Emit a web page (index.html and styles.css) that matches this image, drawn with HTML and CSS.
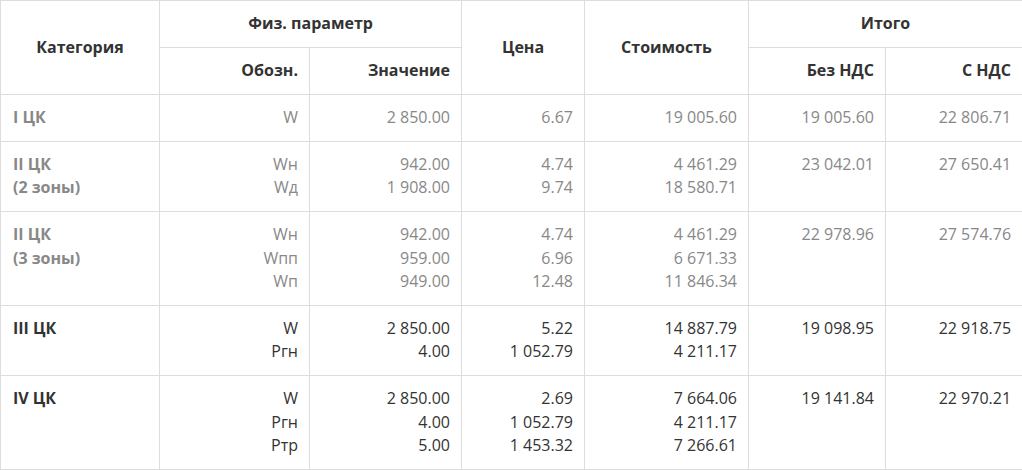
FILE: index.html
```html
<!DOCTYPE html>
<html lang="ru">
<head>
<meta charset="utf-8">
<title>Тарифы</title>
<link rel="stylesheet" href="styles.css">
</head>
<body>
<table class="tariffs">
  <colgroup>
    <col class="c1"><col class="c2"><col class="c3"><col class="c4"><col class="c5"><col class="c6"><col class="c7">
  </colgroup>
  <thead>
    <tr>
      <th rowspan="2" class="center">Категория</th>
      <th colspan="2" class="center">Физ. параметр</th>
      <th rowspan="2" class="center">Цена</th>
      <th rowspan="2" class="center">Стоимость</th>
      <th colspan="2" class="center">Итого</th>
    </tr>
    <tr>
      <th>Обозн.</th>
      <th>Значение</th>
      <th>Без НДС</th>
      <th>С НДС</th>
    </tr>
  </thead>
  <tbody>
    <tr class="muted">
      <td class="cat">I ЦК</td>
      <td>W</td>
      <td>2 850.00</td>
      <td>6.67</td>
      <td>19 005.60</td>
      <td>19 005.60</td>
      <td>22 806.71</td>
    </tr>
    <tr class="muted">
      <td class="cat">II ЦК<br>(2 зоны)</td>
      <td>Wн<br>Wд</td>
      <td>942.00<br>1 908.00</td>
      <td>4.74<br>9.74</td>
      <td>4 461.29<br>18 580.71</td>
      <td>23 042.01</td>
      <td>27 650.41</td>
    </tr>
    <tr class="muted">
      <td class="cat">II ЦК<br>(3 зоны)</td>
      <td>Wн<br>Wпп<br>Wп</td>
      <td>942.00<br>959.00<br>949.00</td>
      <td>4.74<br>6.96<br>12.48</td>
      <td>4 461.29<br>6 671.33<br>11 846.34</td>
      <td>22 978.96</td>
      <td>27 574.76</td>
    </tr>
    <tr>
      <td class="cat">III ЦК</td>
      <td>W<br>Pгн</td>
      <td>2 850.00<br>4.00</td>
      <td>5.22<br>1 052.79</td>
      <td>14 887.79<br>4 211.17</td>
      <td>19 098.95</td>
      <td>22 918.75</td>
    </tr>
    <tr>
      <td class="cat">IV ЦК</td>
      <td>W<br>Pгн<br>Pтр</td>
      <td>2 850.00<br>4.00<br>5.00</td>
      <td>2.69<br>1 052.79<br>1 453.32</td>
      <td>7 664.06<br>4 211.17<br>7 266.61</td>
      <td>19 141.84</td>
      <td>22 970.21</td>
    </tr>
  </tbody>
</table>
</body>
</html>
```
FILE: styles.css
```css
html, body {
  margin: 0;
  padding: 0;
  background: #fff;
}
body {
  font-family: "Open Sans", "Liberation Sans", sans-serif;
  font-size: 16px;
  color: #333;
}
.tariffs {
  border-collapse: collapse;
  width: 1022px;
  table-layout: fixed;
}
.c1 { width: 159px; }
.c2 { width: 150px; }
.c3 { width: 152px; }
.c4 { width: 123px; }
.c5 { width: 164px; }
.c6 { width: 137px; }
.c7 { width: 137px; }
.tariffs th,
.tariffs td {
  border: 1px solid #dddddd;
  padding: 11.25px 11px;
  line-height: 23.4px;
  text-align: right;
  vertical-align: top;
}
.tariffs th {
  font-weight: 700;
  color: #333;
  vertical-align: middle;
}
.tariffs th.center {
  text-align: center;
}
.tariffs td.cat {
  text-align: left;
  font-weight: 700;
  padding-left: 12px;
}
.tariffs tr.muted td {
  color: #888888;
}
```
